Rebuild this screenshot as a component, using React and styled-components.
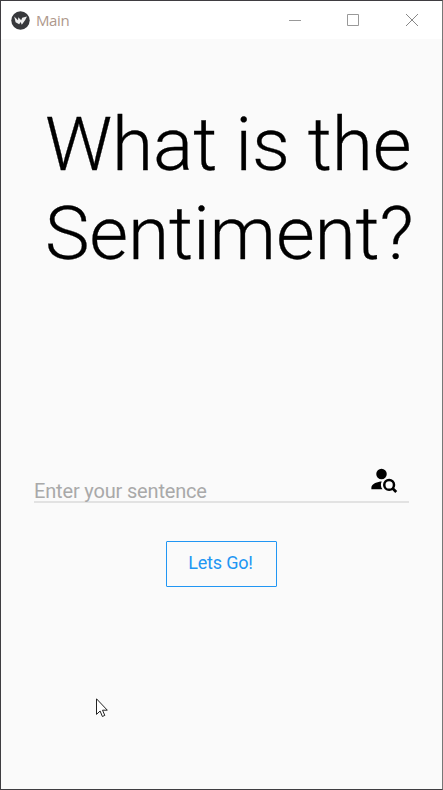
import React from "react";
import styled, { createGlobalStyle } from "styled-components";

const Global = createGlobalStyle`
  * { box-sizing: border-box; }
  body { margin: 0; }
`;
const Window = styled.div`
  position: relative;
  width: 443px;
  height: 790px;
  border: 1px solid #3f3d41;
  border-right-color: #777;
  background: #fafafa;
  display: flex;
  flex-direction: column;
  font-family: Roboto, sans-serif;
`;
const TitleBar = styled.header`
  height: 38px;
  flex: none;
  background: #fff;
  display: flex;
  align-items: center;
  padding-left: 10px;
`;
const AppName = styled.span`
  flex: 1;
  margin: -1px 0 0 6px;
  font: 400 15px/20px "Open Sans", sans-serif;
  letter-spacing: -0.4px;
  color: #ae988c;
`;
const WindowButton = styled.button`
  width: ${(p) => p.$width || 58}px;
  height: 38px;
  padding: 0;
  border: 0;
  background: none;
  display: flex;
  align-items: center;
  justify-content: center;
`;
const Title = styled.h1`
  margin: 61px 0 0 44px;
  font-weight: 300;
  font-size: 75px;
  line-height: 89px;
  letter-spacing: -0.17px;
  color: #000;
  white-space: nowrap;
  -webkit-text-stroke: 0.3px #000;
`;
const Field = styled.div`
  margin: 186px 33px 0;
  height: 39px;
  border-bottom: 2px solid #e2e2e2;
  display: flex;
  justify-content: space-between;
`;
const Input = styled.input`
  flex: 1;
  min-width: 0;
  height: 24px;
  margin-top: 15px;
  padding: 0;
  border: 0;
  outline: 0;
  background: none;
  font: 400 20px/24px Roboto, sans-serif;
  letter-spacing: -0.17px;
  &::placeholder { color: #a9a9a9; opacity: 1; }
`;
const SearchIcon = styled.svg`
  flex: none;
  margin: 1px 10px 0 0;
`;
const GoButton = styled.button`
  align-self: center;
  width: 111px;
  height: 46px;
  margin-top: 38px;
  padding: 0 2px 3px 0;
  border: 1px solid #2196f3;
  border-radius: 1px;
  background: none;
  color: #2196f3;
  font: 400 18px/21px Roboto, sans-serif;
  letter-spacing: -0.2px;
`;
const Cursor = styled.svg`
  position: absolute;
  left: 95px;
  top: 697px;
`;

export default function App() {
  return (
    <>
      <Global />
      <Window>
        <TitleBar>
          <svg width="19" height="19" viewBox="0 0 19 19">
            <circle cx="9.5" cy="9.5" r="9.2" fill="#37383b" />
            <path d="M3.2 5.4L7 9.2L7.3 6.3L10.2 9.3L11.2 6.8L16 5.6L14.2 9L10.8 13.8L9.6 11L8.2 13.2L4.6 11.2Z" fill="#eee" />
          </svg>
          <AppName>Main</AppName>
          <WindowButton aria-label="Minimize">
            <svg width="12" height="12"><path d="M0 6.5H12" stroke="#999" /></svg>
          </WindowButton>
          <WindowButton aria-label="Maximize">
            <svg width="12" height="12"><path d="M.5.5H11.5V11.5H.5Z" stroke="#999" fill="none" /></svg>
          </WindowButton>
          <WindowButton $width={60} aria-label="Close">
            <svg width="12" height="12"><path d="M0 0L12 12M12 0L0 12" stroke="#888" /></svg>
          </WindowButton>
        </TitleBar>
        <Title>What is the<br />Sentiment?</Title>
        <Field>
          <Input placeholder="Enter your sentence" />
          <SearchIcon width="30" height="30" viewBox="0 0 24 24">
            <circle cx="10" cy="7.2" r="4.2" />
            <path d="M10.2 13.2C7.2 13.2 1.9 15 1.9 18v1.4h8.9c-1.6-1.8-1.6-4.5-.6-6.2" />
            <circle cx="16.1" cy="15.9" r="3.9" fill="none" stroke="#000" strokeWidth="2" />
            <path d="M18.8 18.6L21.8 21.6" stroke="#000" strokeWidth="2.2" />
          </SearchIcon>
        </Field>
        <GoButton>Lets Go!</GoButton>
        <Cursor width="12" height="20" viewBox="0 0 12 20">
          <path d="M.5.8V16.4L4.1 13L6.4 18.5L8.8 17.4L6.5 12.2H11.3Z" fill="#fff" stroke="#222" />
        </Cursor>
      </Window>
    </>
  );
}
